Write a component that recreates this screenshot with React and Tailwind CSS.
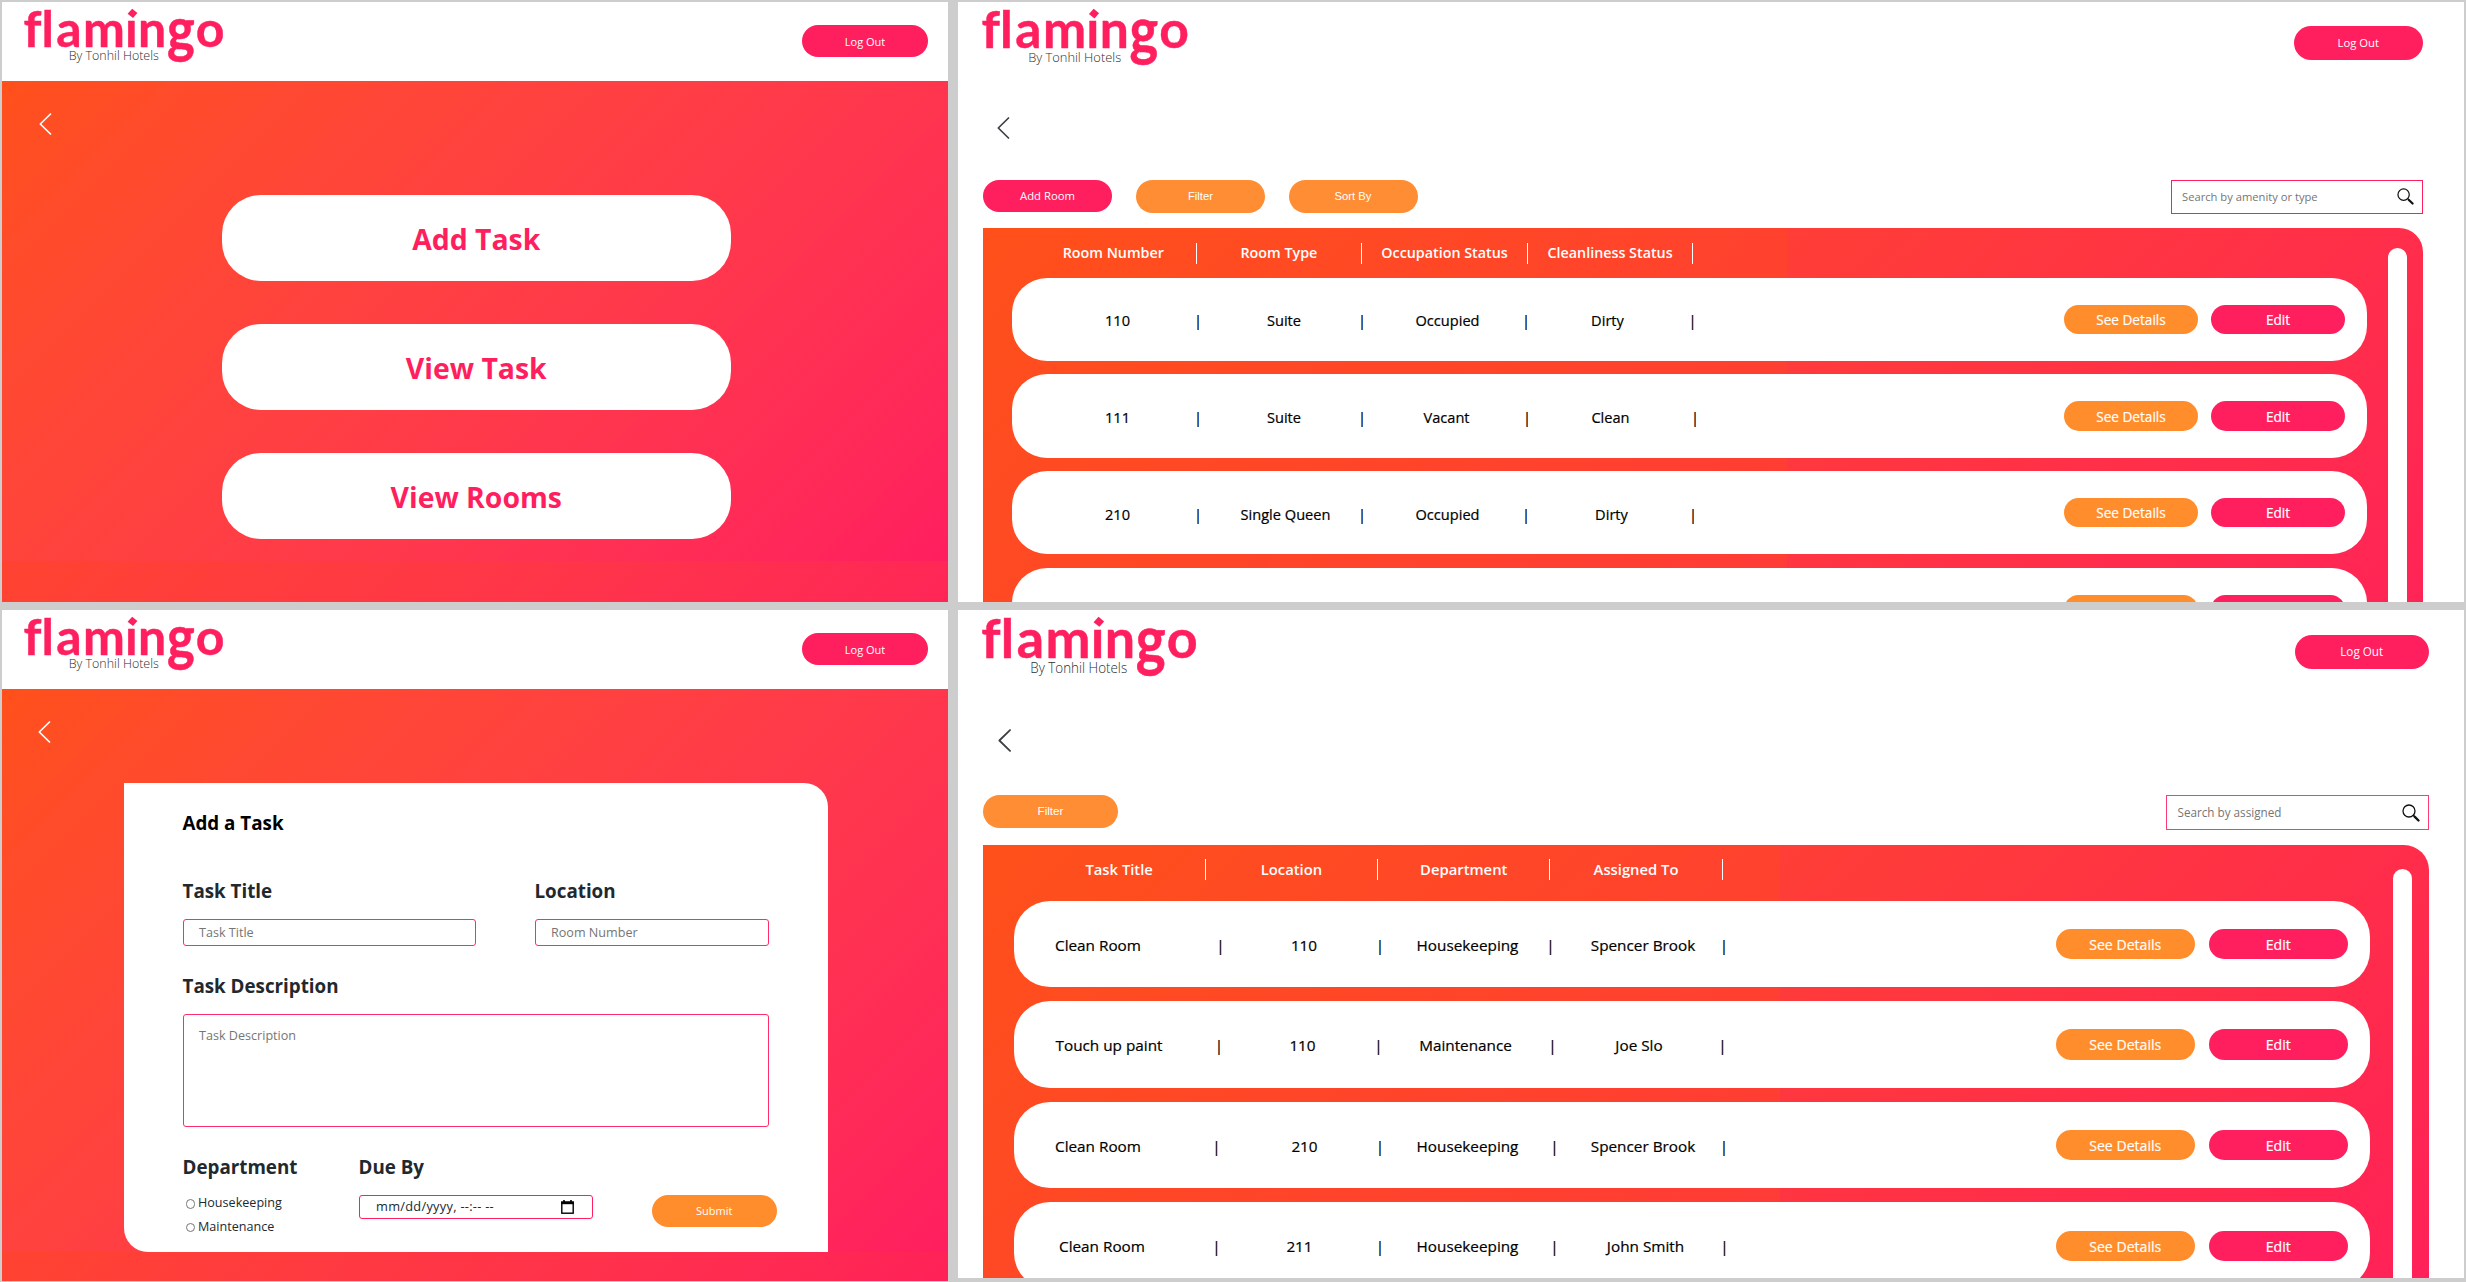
import React from "react";

const rooms = [
  { cells: [["110", 106, 186.5], ["Suite", 272.5, 350.5], ["Occupied", 436, 514.5], ["Dirty", 596, 681]] },
  { cells: [["111", 106, 186.5], ["Suite", 272.5, 350.5], ["Vacant", 435, 515.5], ["Clean", 599, 683.5]] },
  { cells: [["210", 106, 186.5], ["Single Queen", 274, 350.5], ["Occupied", 436, 514.5], ["Dirty", 600, 681.5]] },
  { cells: [] },
];

const tasks = [
  { cells: [["Clean Room", 84.5, 207], ["110", 290.5, 366.5], ["Housekeeping", 454, 537], ["Spencer Brook", 629.5, 710.5]] },
  { cells: [["Touch up paint", 95.5, 205.5], ["110", 289, 365], ["Maintenance", 452, 539], ["Joe Slo", 625.5, 709]] },
  { cells: [["Clean Room", 84.5, 203], ["210", 291, 366.5], ["Housekeeping", 454, 541], ["Spencer Brook", 629.5, 710.5]] },
  { cells: [["Clean Room", 88.5, 203], ["211", 286, 366.5], ["Housekeeping", 454, 541], ["John Smith", 632, 711]] },
];

function Logo({ className }) {
  return (
    <svg className={`overflow-visible ${className}`} viewBox="0 0 202 58" preserveAspectRatio="none">
      <g fill="#ff1f5f" stroke="#ff1f5f" strokeWidth="0.4" fontFamily="Lato, sans-serif" fontWeight="700" fontSize="50">
        <text transform="translate(0 38.5) scale(1 0.98)" x="-0.6 17.4" y="0">fl</text>
        <text x="32.3 59 101 114" y="38.5">amin</text>
        <text transform="translate(142.9 38.5) scale(1.12 1.32)" x="0" y="3.6" fontSize="47">g</text>
        <text x="171.7" y="38.5">o</text>
      </g>
      <rect x="101" y="-1" width="13" height="12.4" fill="#fff" />
      <path d="M108.2 0.8 L113.4 5 L109 10 L103.6 5.8 Z" fill="#ff1f5f" />
      <text x="44.8" y="52.2" fontFamily="'Open Sans', sans-serif" fontWeight="300" fontSize="12.8" fill="#2b2f33" textLength="90" lengthAdjust="spacingAndGlyphs">
        By Tonhil Hotels
      </text>
    </svg>
  );
}

function Chevron({ className }) {
  return (
    <svg className={className} viewBox="0 0 13 22" fill="none" stroke="currentColor" strokeWidth="1.7" strokeLinecap="round" strokeLinejoin="round">
      <path d="M11.5 1 L1.3 11 L11.5 21" />
    </svg>
  );
}

function SearchIcon({ className }) {
  return (
    <svg className={className} viewBox="0 0 18 18" fill="none" stroke="#111">
      <circle cx="7" cy="7" r="6" strokeWidth="1.3" />
      <path d="M11.2 11.2 L12.6 12.6" strokeWidth="1.4" />
      <path d="M12.6 12.6 L16.5 16.5" strokeWidth="2.3" strokeLinecap="round" />
    </svg>
  );
}

function Pill({ className, children }) {
  return <button className={`flex shrink-0 items-center justify-center rounded-full text-white leading-none whitespace-nowrap ${className}`}>{children}</button>;
}

function DarkHeader() {
  return (
    <header className="flex h-[78.5px] items-start justify-between bg-white pl-[22px] pr-[20px]">
      <Logo className="mt-[6px] h-[58px] w-[202px]" />
      <Pill className="mt-[23px] h-8 w-[126px] bg-[#ff1f5f] text-[11px]">Log Out</Pill>
    </header>
  );
}

function MenuScreen() {
  return (
    <section className="flex h-[600px] w-[946px] flex-col overflow-hidden bg-white">
      <DarkHeader />
      <div className="h-[480.5px] bg-linear-135 from-[#ff501a] to-[#ff1e5f] pt-[32px]">
        <Chevron className="ml-[36.5px] h-[22px] w-[13px] text-white" />
        <div className="mt-[60.5px] ml-[219.5px] flex flex-col gap-[43px]">
          {["Add Task", "View Task", "View Rooms"].map((label) => (
            <button key={label} className="flex h-[86px] w-[509.5px] items-center justify-center rounded-[39px] bg-white pt-[2px] text-[28.4px] leading-none font-bold text-[#ff1f5f]">
              {label}
            </button>
          ))}
        </div>
      </div>
      <div className="h-[41px] bg-linear-135 from-[#ff4330] to-[#ff2657]" />
    </section>
  );
}

function Field({ label, className, children }) {
  return (
    <div className={`flex flex-col ${className}`}>
      <span className="text-[18.8px] leading-[27px] font-bold text-[#22292e]">{label}</span>
      {children}
    </div>
  );
}

function Radio({ label }) {
  return (
    <label className="flex h-[23.5px] items-center text-[12.6px] leading-none text-[#22292e]">
      <span className="mr-[3px] ml-[3px] size-[9.5px] rounded-full border border-[#767676] bg-white" />
      {label}
    </label>
  );
}

function CalendarIcon() {
  return (
    <svg className="h-[14px] w-[13px]" viewBox="0 0 13 14" fill="none" stroke="#000">
      <rect x="0.8" y="2" width="11.4" height="11.2" strokeWidth="1.4" />
      <path d="M0.2 3 H12.8" strokeWidth="2.4" />
      <path d="M3 0 V2 M10 0 V2" strokeWidth="1.6" />
    </svg>
  );
}

function AddTaskScreen() {
  return (
    <section className="flex h-[670.5px] w-[946px] flex-col overflow-hidden bg-white">
      <DarkHeader />
      <div className="h-[563.5px] bg-linear-135 from-[#ff501a] to-[#ff1e5f] pt-[32.5px]">
        <Chevron className="ml-[36px] h-[22px] w-[13px] text-white" />
        <div className="mt-[40px] ml-[122px] flex h-[469px] w-[703.5px] flex-col rounded-tr-[24px] rounded-bl-[24px] bg-white pt-[27px] pl-[58.5px]">
          <h1 className="text-[18.8px] leading-[27px] font-bold text-black">Add a Task</h1>
          <div className="mt-[41px] flex gap-[59px]">
            <Field label="Task Title">
              <div className="mt-[14px] flex h-[27px] w-[293px] items-center rounded-[3px] border-[1.5px] border-[#ff2c69] pt-px pl-[15.5px] text-[12.6px] text-[#757575]">Task Title</div>
            </Field>
            <Field label="Location">
              <div className="mt-[14px] flex h-[27px] w-[234.5px] items-center rounded-[3px] border-[1.5px] border-[#ff2c69] pt-px pl-[15.5px] text-[12.6px] text-[#757575]">Room Number</div>
            </Field>
          </div>
          <Field label="Task Description" className="mt-[27px]">
            <div className="mt-[14px] h-[113px] w-[586.5px] rounded-[3px] border-[1.5px] border-[#ff2c69] pt-[13px] pl-[15.5px] text-[12.6px] leading-[16px] text-[#757575]">Task Description</div>
          </Field>
          <div className="mt-[27px] flex">
            <Field label="Department" className="w-[176px]">
              <div className="mt-[11px] flex flex-col">
                <Radio label="Housekeeping" />
                <Radio label="Maintenance" />
              </div>
            </Field>
            <Field label="Due By" className="w-[293px]">
              <div className="mt-[13.5px] flex h-[24px] w-[234.5px] items-center justify-between rounded-[3px] border-[1.5px] border-[#ff1f5f] pr-[18.5px] pl-[16.5px] text-[12.8px] leading-none text-[#22292e]">
                <span className="tracking-[0.28px]">mm/dd/yyyy, --:-- --</span>
                <CalendarIcon />
              </div>
            </Field>
            <Pill className="mt-[40.5px] h-8 w-[125.5px] bg-[#ff8d2b] text-[11px]">Submit</Pill>
          </div>
        </div>
      </div>
      <div className="h-[28.5px] bg-linear-135 from-[#ff4330] to-[#ff2158]" />
    </section>
  );
}

function Row({ cells, className, buttonClass, gapClass }) {
  let prev = 0;
  return (
    <div className={`flex shrink-0 items-center bg-white [-webkit-text-stroke-width:0.2px] ${className}`}>
      {cells.map(([text, center, bar], i) => {
        const width = 2 * (center - prev);
        const gap = bar - prev - width;
        prev = bar;
        return (
          <React.Fragment key={i}>
            <span className="flex shrink-0 justify-center pt-[2.5px] whitespace-nowrap" style={{ width }}>{text}</span>
            <span className="flex w-0 shrink-0 justify-center pt-[2.5px]" style={{ marginLeft: gap }}>|</span>
          </React.Fragment>
        );
      })}
      <div className={`ml-auto flex ${gapClass}`}>
        <Pill className={`bg-[#ff8d2b] ${buttonClass}`}>See Details</Pill>
        <Pill className={`bg-[#ff1f5f] ${buttonClass}`}>Edit</Pill>
      </div>
    </div>
  );
}

function HeaderCells({ labels, className }) {
  return labels.map((label) => (
    <span key={label} className={`flex shrink-0 items-center justify-center border-r-[1.5px] border-white pt-px font-semibold whitespace-nowrap text-white ${className}`}>
      {label}
    </span>
  ));
}

function RoomsScreen() {
  return (
    <section className="flex h-[600px] w-[1506px] flex-col overflow-hidden bg-white pl-[25px]">
      <header className="flex h-[79px] items-start justify-between pr-[41px]">
        <Logo className="mt-[6px] -ml-px h-[60.5px] w-[208.5px]" />
        <Pill className="mt-[24px] h-[33.5px] w-[129.5px] bg-[#ff1f5f] text-[11.3px]">Log Out</Pill>
      </header>
      <Chevron className="mt-[35.5px] ml-[14px] h-[22px] w-[13px] text-[#3a4045]" />
      <div className="mt-[41.5px] flex h-[48px] items-start pr-[41px]">
        <Pill className="h-[31.5px] w-[129px] bg-[#ff1f5f] text-[11.3px]">Add Room</Pill>
        <Pill className="ml-[24px] h-[33px] w-[129px] bg-[#ff8d33] font-['Liberation_Sans',sans-serif] text-[11.3px]">Filter</Pill>
        <Pill className="ml-[23.5px] h-[33px] w-[129px] bg-[#ff8d33] font-['Liberation_Sans',sans-serif] text-[11.3px]">Sort By</Pill>
        <div className="ml-auto flex h-[33.5px] w-[252.5px] items-center justify-between border-[1.5px] border-[#ff1f5f] pr-[8px] pl-[10.5px] text-[11.2px] leading-none text-[#757575]">
          Search by amenity or type
          <SearchIcon className="size-[17px]" />
        </div>
      </div>
      <div className="flex w-[1440px] flex-1 overflow-hidden rounded-tr-[24px] bg-[linear-gradient(135deg,#ff501a,#ff3b37),linear-gradient(135deg,#ff3e36,#ff2457)] bg-[size:804px_100%,637px_100%] bg-[position:left_top,right_top] bg-no-repeat pl-[28.5px]">
        <div className="flex w-[1355px] shrink-0 flex-col">
          <div className="flex h-[49.5px] shrink-0 pt-[14.5px] pl-[19.5px] text-[14.3px] leading-none">
            <HeaderCells labels={["Room Number", "Room Type", "Occupation Status", "Cleanliness Status"]} className="h-[21px] w-[165.6px]" />
          </div>
          <div className="flex h-[420px] shrink-0 flex-col gap-[13.5px]">
            {rooms.map((r, i) => (
              <Row key={i} cells={r.cells} className="h-[83.3px] rounded-[35px] pr-[21.5px] text-[14.6px] leading-none text-black" gapClass="gap-[13px]" buttonClass="h-[29.3px] w-[134px] pt-px text-[13.6px]" />
            ))}
          </div>
        </div>
        <div className="mt-[19.5px] ml-[21.5px] w-[19px] shrink-0 rounded-t-full bg-white" />
      </div>
    </section>
  );
}

function TasksScreen() {
  return (
    <section className="flex h-[668px] w-[1506px] flex-col overflow-hidden bg-white pl-[25px]">
      <header className="flex h-[79px] items-start justify-between pr-[35px]">
        <Logo className="mt-[5.5px] -ml-px h-[63px] w-[217.5px]" />
        <Pill className="mt-[24.5px] h-[34px] w-[134.5px] bg-[#ff1f5f] text-[11.7px]">Log Out</Pill>
      </header>
      <Chevron className="mt-[40px] ml-[15px] h-[23px] w-[13.6px] text-[#3a4045]" />
      <div className="mt-[42.5px] flex h-[50.5px] items-start pr-[35px]">
        <Pill className="h-[33.5px] w-[135px] bg-[#ff8d33] font-['Liberation_Sans',sans-serif] text-[11.7px]">Filter</Pill>
        <div className="ml-auto flex h-[35.5px] w-[263px] items-center justify-between border-[1.5px] border-[#ff3b74] pt-px pr-[8.5px] pl-[10.5px] text-[11.7px] leading-none text-[#757575]">
          Search by assigned
          <SearchIcon className="size-[18px]" />
        </div>
      </div>
      <div className="flex w-[1446px] flex-1 overflow-hidden rounded-tr-[25px] bg-[linear-gradient(135deg,#ff501a,#ff3a38),linear-gradient(135deg,#ff3e36,#ff2158)] bg-[size:797px_100%,649.5px_100%] bg-[position:left_top,right_top] bg-no-repeat pl-[30.5px]">
        <div className="flex w-[1356.5px] shrink-0 flex-col">
          <div className="flex h-[55.5px] shrink-0 pt-[13.5px] pl-[20px] text-[14.8px] leading-none">
            <HeaderCells labels={["Task Title", "Location", "Department", "Assigned To"]} className="h-[21.5px] w-[172.3px]" />
          </div>
          <div className="flex h-[420px] shrink-0 flex-col gap-[13.8px]">
            {tasks.map((r, i) => (
              <Row key={i} cells={r.cells} className="h-[86.8px] rounded-[36px] pr-[22px] text-[15.3px] leading-none text-black" gapClass="gap-[13.5px]" buttonClass="h-[30.3px] w-[139.5px] pt-[2px] text-[14.1px]" />
            ))}
          </div>
        </div>
        <div className="mt-[24px] ml-[22.5px] w-[19px] shrink-0 rounded-t-full bg-white" />
      </div>
    </section>
  );
}

export default function App() {
  return (
    <main className="flex h-[1282px] w-[2466px] gap-[10px] overflow-hidden bg-[#cdcdcd] pt-[2px] pl-[2px] font-['Open_Sans',sans-serif]">
      <div className="flex flex-col gap-2">
        <MenuScreen />
        <AddTaskScreen />
      </div>
      <div className="flex flex-col gap-2">
        <RoomsScreen />
        <TasksScreen />
      </div>
    </main>
  );
}
